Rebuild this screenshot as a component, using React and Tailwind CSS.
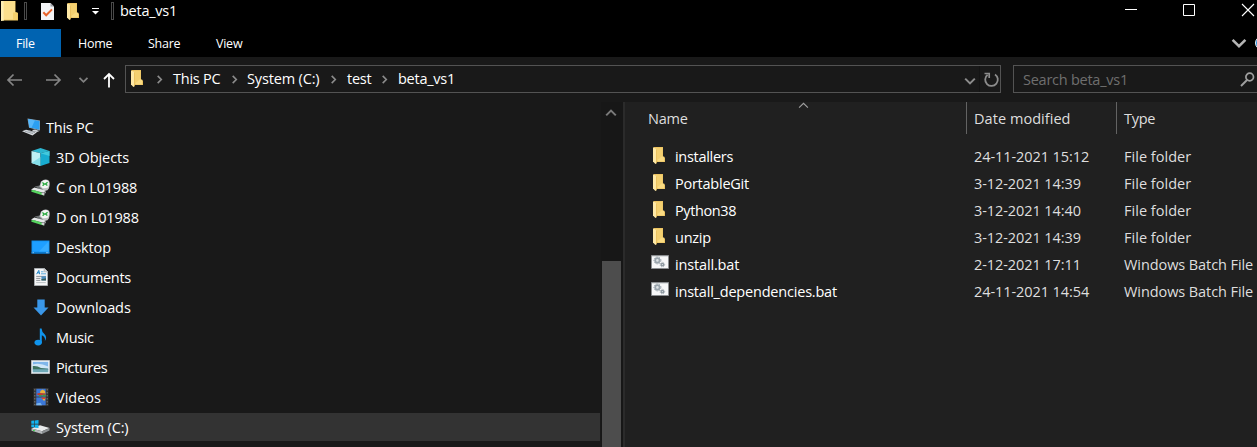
import React from "react";

/* ---------- icons ---------- */

function Folder({ className = "" }) {
  return (
    <svg className={"shrink-0 " + className} width="12" height="17" viewBox="0 0 12 17">
      <path d="M0.5 0H10V10L12 10.6V15H1Z" fill="#e9bf5c" />
      <path d="M3 0.6H9.6V14H3Z" fill="#f4d070" />
      <path d="M8.6 9.6H11.2V14.6H4.6V13Z" fill="#fadb82" />
      <path d="M0 0.6L3.4 1.8V16.4L2.4 17L0 14.4Z" fill="#ffe9a6" />
      <path d="M3.2 2.2L4 2.4V15.6L3.2 16.4Z" fill="#e8bd58" />
    </svg>
  );
}

function BigFolder() {
  return (
    <svg className="shrink-0" width="17" height="20" viewBox="0 0 17 20">
      <path d="M0 0H14.5V11L17 12V19.4H0Z" fill="#ecc662" />
      <path d="M0 0H3V19.4L0 20Z" fill="#fdeeb4" />
      <path d="M2.6 0H14V18.6H2.6Z" fill="#fbdf8c" />
      <path d="M12 11.5H16.4V18.8H12Z" fill="#f5d06c" />
    </svg>
  );
}

function CheckedPage() {
  return (
    <svg className="shrink-0" width="13" height="17" viewBox="0 0 13 17">
      <path d="M0 0H9.5L13 3.5V17H0Z" fill="#f3f4f6" />
      <path d="M9.5 0V3.5H13Z" fill="#9a9da3" />
      <path d="M2.3 9.2L5.2 12.3L11 6.4" fill="none" stroke="#e8632b" strokeWidth="2" />
    </svg>
  );
}

function Chevron({ dir, size = 8, color = "#8c8c8c", w = 1.8, className = "" }) {
  const d = {
    right: "M3 1L7 5L3 9",
    down: "M1 3L5 7L9 3",
    up: "M1 7L5 3L9 7",
  }[dir];
  return (
    <svg className={"shrink-0 " + className} width={size} height={size} viewBox="0 0 10 10">
      <path d={d} fill="none" stroke={color} strokeWidth={w} />
    </svg>
  );
}

function Computer() {
  return (
    <svg width="19" height="18" viewBox="0 0 19 18">
      <path d="M5.5 0.5L18 2.5V12.5L7 9.8Z" fill="#8fa3b3" />
      <path d="M6.2 1.3L17.5 3V11.8L7.4 9.2Z" fill="#2b9ff2" />
      <path d="M6.2 1.3L13 2.3L9.5 9.7L7.4 9.2Z" fill="#56b7fa" />
      <path d="M10 12L13 11.5L17.5 13L15 14L11.5 13.6Z" fill="#cfd5da" />
      <path d="M0 13.2L4 11.8L15 14.2L10.5 17.4Z" fill="#d6dade" />
      <path d="M3 13.2L11 15.6M6 12.6L13 14.6" stroke="#8e969d" strokeWidth="0.8" />
    </svg>
  );
}

function Cube() {
  return (
    <svg width="19" height="18" viewBox="0 0 19 18">
      <path d="M0.5 3L9.5 0L18.5 3L9.5 5.2Z" fill="#2cb5cf" />
      <path d="M0.5 3L9.5 5.2V18L0.5 15Z" fill="#bdf0f5" />
      <path d="M0.5 15L9.5 9V18Z" fill="#85dfea" />
      <path d="M9.5 5.2L18.5 3V15L9.5 18Z" fill="#18acd0" />
      <path d="M9.5 5.2L18.5 3V8Z" fill="#42c9dd" />
    </svg>
  );
}

function NetDrive() {
  return (
    <svg width="19" height="17" viewBox="0 0 19 17">
      <path d="M3.6 7.6L8.6 6.6L14 10.4L11 11.4Z" fill="#6c7072" />
      <path d="M8.4 7.6L10 2.6Q14-1.4 18 1.8Q19.6 5 17.8 9.6Q16.4 12.6 13 11.6Z" fill="#bfc3c4" />
      <path d="M9.6 7L10.6 3Q14-0.4 17.4 2.2Q18.4 5 17 8.4Q14 9.6 11.6 9Z" fill="#f4f5f5" />
      <path d="M11.4 3.4L13.4 5L11.6 6.8M16.6 3.2L14.4 5L16.4 6.6" fill="none" stroke="#23a83b" strokeWidth="1.3" />
      <path d="M0 10.4L3.4 8.4L14.4 11.6L13.4 13.4L8 12.8Z" fill="#e6e8e9" />
      <path d="M0.4 11.2L3 11L12.6 14.2L13 16.6L9 15.6L0.4 12.8Z" fill="#58d561" />
      <path d="M10.4 13.6L13.4 13.6V16.6L10.8 15.8Z" fill="#cfd2d3" />
      <path d="M13.4 13.4L15 11.8V13.6L13.4 15.6Z" fill="#8e9294" />
    </svg>
  );
}

function Desktop() {
  return (
    <svg width="19" height="14" viewBox="0 0 19 14">
      <path d="M0.5 0.5H18.5V13.5H0.5Z" fill="#0f8be8" />
      <path d="M1.3 1.3H17.7V11.6H1.3Z" fill="#1e9fff" />
      <path d="M17.7 1.3V11.6H8Z" fill="#35acff" />
      <path d="M0.5 12H18.5V13.5H0.5Z" fill="#0b79cc" />
      <path d="M1.5 12.7H3M15 12.7H17.5" stroke="#cfe9ff" strokeWidth="0.6" />
    </svg>
  );
}

function Document() {
  return (
    <svg width="14" height="18" viewBox="0 0 14 18">
      <path d="M0.5 0.5H10.5L13.5 3.5V17.5H0.5Z" fill="#f5f6f7" stroke="#a9adb0" />
      <path d="M10.2 0.5V3.8H13.5" fill="#d5d8da" stroke="#a9adb0" strokeWidth="0.8" />
      <path d="M2.6 6.2L4.8 2.4L5.6 6.2M3.5 4.8H5.4" stroke="#1e85c8" strokeWidth="1" fill="none" />
      <path d="M7 3.8H9.5M7 5.8H12" stroke="#4ba0d4" strokeWidth="0.9" />
      <path d="M2.2 8.4H12M2.2 10.4H6.4M2.2 12.4H6.4" stroke="#83898e" strokeWidth="0.9" />
      <path d="M7.4 8.3H12V12.4H7.4Z" fill="#4d8fc0" />
      <path d="M7.4 11.3L12 10.2V12.4H7.4Z" fill="#375b55" />
      <path d="M2.2 14.6H11.8" stroke="#b5babd" strokeWidth="0.9" />
    </svg>
  );
}

function Download() {
  return (
    <svg width="16" height="17" viewBox="0 0 16 17">
      <path d="M4.3 0.5H11.7V8.5H15.5L8 16.5L0.5 8.5H4.3Z" fill="#3a97e8" />
    </svg>
  );
}

function Music() {
  return (
    <svg width="13" height="18" viewBox="0 0 13 18">
      <ellipse cx="4.2" cy="14.6" rx="3.7" ry="2.8" fill="#1094ec" />
      <path d="M5.8 0.5H7.6Q7.8 4 10.4 6Q13.6 9 10.8 13.2Q11.8 9 7.8 7.2V14.8H5.8Z" fill="#1094ec" />
    </svg>
  );
}

function Picture() {
  return (
    <svg width="19" height="14" viewBox="0 0 19 14">
      <path d="M0.5 0.5H18.5V13.5H0.5Z" fill="#f4f5f6" stroke="#b6babd" />
      <path d="M1.8 1.8H17.2V12.2H1.8Z" fill="#7fb6ea" />
      <path d="M1.8 4.5Q9 2.5 17.2 6.5V8.5H1.8Z" fill="#cfe6f7" />
      <path d="M1.8 6Q6 5.4 10 8L17.2 8.8V9.8H1.8Z" fill="#3f7461" />
      <path d="M1.8 9.4H17.2V12.2H1.8Z" fill="#6fa9b7" />
    </svg>
  );
}

function Video() {
  return (
    <svg width="16" height="18" viewBox="0 0 16 18">
      <path d="M0.5 0H15.5V18H0.5Z" fill="#353535" />
      <path d="M1.8 1V17M14.2 1V17" stroke="#777" strokeWidth="1" strokeDasharray="1.5 1.5" />
      <path d="M3.3 0.8H12.7V8.6H3.3Z" fill="#3c78d8" />
      <path d="M3.3 9.4H12.7V17.2H3.3Z" fill="#3c78d8" />
      <path d="M7.4 3L9.6 1.4L12 3L12.4 5.4H7Z" fill="#e8b23a" />
      <path d="M3.3 6L6 5L12.7 5.6V7L6 7.4Z" fill="#c53a2c" />
      <path d="M6 7H9L8 8.6H6Z" fill="#3e9a45" />
      <path d="M9.6 6.6H12.7V8.6H9.6Z" fill="#3e9a45" />
      <path d="M8 9.4H12.7V11H9Z" fill="#d8432f" />
      <path d="M9.6 11H12V12.6H10.4Z" fill="#e8b23a" />
      <path d="M3.3 15.4L7.5 14.8L9 17.2H3.3Z" fill="#79b5ee" />
    </svg>
  );
}

function SystemDrive() {
  return (
    <svg width="19" height="14" viewBox="0 0 19 14">
      <path d="M0.5 8.5L9 5.2L18.5 8L11 11.2Z" fill="#e9ebec" />
      <path d="M0.5 8.5L11 11.2V14L0.5 10.8Z" fill="#b5b9bb" />
      <path d="M11 11.2L18.5 8V10.4L11 14Z" fill="#8b8f91" />
      <path d="M2 10.3L4 10.9" stroke="#3bd14c" strokeWidth="1" />
      <path d="M0.3 0.8L3.4 0.5V3.8H0.3ZM4 0.4L7.5 0V3.8H4ZM0.3 4.4H3.4V7.6L0.3 7.3ZM4 4.4H7.5V8L4 7.7Z" fill="#12b4f0" />
    </svg>
  );
}

function BatchFile() {
  return (
    <svg className="shrink-0" width="18" height="14" viewBox="0 0 18 14">
      <path d="M0.5 0.5H17.5V13.5H0.5Z" fill="#f7f8f9" stroke="#8a8d90" />
      <path d="M1 1H17V1.8H1Z" fill="#d5d8da" />
      <circle cx="6.4" cy="5.4" r="2.2" fill="#dfe4e7" stroke="#9aa5ad" strokeWidth="1.8" />
      <circle cx="6.4" cy="5.4" r="3.5" fill="none" stroke="#9aa5ad" strokeWidth="1" strokeDasharray="1.3 1.2" />
      <circle cx="11.4" cy="9.6" r="1.3" fill="#dfe4e7" stroke="#8c979f" strokeWidth="1.3" />
      <circle cx="11.4" cy="9.6" r="2.3" fill="none" stroke="#8c979f" strokeWidth="0.8" strokeDasharray="0.9 0.9" />
    </svg>
  );
}

/* ---------- data ---------- */

const tree = [
  { label: "3D Objects", icon: <Cube />, fit: "tracking-[-0.05px]" },
  { label: "C on L01988", icon: <NetDrive />, fit: "tracking-[-0.2px]" },
  { label: "D on L01988", icon: <NetDrive />, fit: "tracking-[-0.17px]" },
  { label: "Desktop", icon: <Desktop />, fit: "tracking-[-0.15px]" },
  { label: "Documents", icon: <Document />, fit: "tracking-[-0.3px]" },
  { label: "Downloads", icon: <Download />, fit: "tracking-[-0.1px]" },
  { label: "Music", icon: <Music />, fit: "tracking-[-0.35px]" },
  { label: "Pictures", icon: <Picture />, fit: "tracking-[-0.4px]" },
  { label: "Videos", icon: <Video />, fit: "tracking-[0px]" },
  { label: "System (C:)", icon: <SystemDrive />, fit: "tracking-[-0.15px]", selected: true },
];

const files = [
  { name: "installers", date: "24-11-2021 15:12", type: "File folder", fit: "tracking-[-0.3px]" },
  { name: "PortableGit", date: "3-12-2021 14:39", type: "File folder", fit: "tracking-[-0.25px]" },
  { name: "Python38", date: "3-12-2021 14:40", type: "File folder", fit: "tracking-[-0.4px]" },
  { name: "unzip", date: "3-12-2021 14:39", type: "File folder", fit: "tracking-[-0.25px]" },
  { name: "install.bat", date: "2-12-2021 17:11", type: "Windows Batch File", fit: "tracking-[-0.15px]" },
  { name: "install_dependencies.bat", date: "24-11-2021 14:54", type: "Windows Batch File", fit: "tracking-[-0.2px]" },
];

export default function App() {
  return (
    <div className="flex h-[447px] w-[1257px] flex-col overflow-hidden bg-[#191919] font-['Open_Sans','Noto_Sans',sans-serif] text-[14.5px] tracking-[-0.25px] text-white">
      <header className="flex h-[29px] shrink-0 items-start bg-black">
        <div className="flex h-[22px] items-center pl-px">
          <BigFolder />
          <span className="ml-[6px] h-[18px] w-[3px] border border-[#4a4a4a]" />
          <span className="ml-[14px]"><CheckedPage /></span>
          <Folder className="ml-[13px]" />
          <svg className="ml-[12px]" width="9" height="8" viewBox="0 0 9 8">
            <path d="M1 1.500H8" stroke="#fff" />
            <path d="M1 4H8L4.500 7.500Z" fill="#fff" />
          </svg>
          <span className="ml-[11px] h-[18px] w-[3px] border border-[#4a4a4a]" />
          <span className="ml-[6px]">beta_vs1</span>
        </div>
        <svg className="ml-auto mt-[3px]" width="132" height="14" viewBox="0 0 132 14">
          <path d="M0 6.500H12" stroke="#fff" />
          <path d="M58.500 1.500H69.500V12.500H58.500Z" fill="none" stroke="#fff" />
          <path d="M117 1L129 13M129 1L117 13" stroke="#fff" strokeWidth="1.100" />
        </svg>
      </header>

      <nav className="flex h-[28px] shrink-0 items-center bg-black text-[12.5px]">
        <span className="flex h-full w-[61px] items-center bg-[#0063b1] pl-[16px] pt-[2px]">File</span>
        <span className="w-[70px] pl-[17px] pt-[2px]">Home</span>
        <span className="w-[68px] pl-[17px] pt-[2px]">Share</span>
        <span className="pl-[17px] pt-[2px]">View</span>
        <Chevron dir="down" size={16} color="#b4b4b4" w={1.600} className="ml-auto" />
        <svg className="ml-[8px]" width="2" height="14" viewBox="0 0 2 14">
          <circle cx="7" cy="7" r="6.500" fill="#2b8fd8" stroke="#e8f3fb" />
        </svg>
      </nav>

      <div className="flex h-[45px] shrink-0 items-start pt-[8px]">
        <svg className="shrink-0" width="125" height="28" viewBox="0 0 125 28" fill="none">
          <path d="M22 15H8M13.500 9.500L8 15L13.500 20.500" stroke="#858585" strokeWidth="1.700" />
          <path d="M46 15H60M54.500 9.500L60 15L54.500 20.500" stroke="#858585" strokeWidth="1.700" />
          <path d="M79.500 12.800L83.500 16.800L87.500 12.800" stroke="#808080" strokeWidth="1.800" />
          <path d="M109 22.500V9M104 14L109 9L114 14" stroke="#fff" strokeWidth="1.800" />
        </svg>
        <div className="flex h-[28px] w-[876px] shrink-0 items-center border border-[#535353] pl-[5px] pr-0">
          <Folder className="mb-px" />
          <Chevron dir="right" size={9} className="ml-[12px]" />
          <span className="w-[66px] pl-[9px]">This PC</span>
          <Chevron dir="right" size={9} />
          <span className="w-[90px] pl-[8px] tracking-[-0.15px]">System (C:)</span>
          <Chevron dir="right" size={9} />
          <span className="w-[42px] pl-[9px]">test</span>
          <Chevron dir="right" size={9} />
          <span className="pl-[9px]">beta_vs1</span>
          <Chevron dir="down" size={12} w={1.700} className="ml-auto mt-[3px]" />
          <span className="ml-[3px] h-[26px] w-px bg-[#141414]" />
          <svg className="ml-[3px]" width="17" height="17" viewBox="0 0 17 17" fill="none">
            <path d="M12 3.400A6.300 6.300 0 1 1 4.600 3.700" stroke="#8c8c8c" strokeWidth="1.800" />
            <path d="M1.500 2.500H6.200V7" stroke="#8c8c8c" strokeWidth="1.700" />
          </svg>
        </div>
        <div className="ml-[12px] flex h-[28px] w-[244px] shrink-0 items-center border border-r-0 border-[#535353] pl-[9px] text-[#6f6f6f]">
          <span className="pt-px">Search beta_vs1</span>
          <svg className="ml-auto mr-[2px]" width="15" height="15" viewBox="0 0 15 15" fill="none">
            <circle cx="9.700" cy="5" r="3.800" stroke="#a0a0a0" strokeWidth="1.700" />
            <path d="M7 8L1 14" stroke="#a0a0a0" strokeWidth="1.900" />
          </svg>
        </div>
      </div>

      <main className="flex min-h-0 flex-1">
        <aside className="flex w-[601px] shrink-0 flex-col pt-[10px]">
          <div className="flex h-[30px] shrink-0 items-center pl-[22px]">
            <Computer />
            <span className="ml-[5px] pt-[2px]">This PC</span>
          </div>
          {tree.map((t) => (
            <div key={t.label} className="flex h-[30px] shrink-0 items-center">
              <div className={t.selected ? "flex h-[28px] w-[600px] items-center bg-[#333333]" : "flex h-[28px] w-[600px] items-center"}>
                <span className="ml-[31px] flex w-[19px] justify-center">{t.icon}</span>
                <span className={"ml-[6px] pt-[2px] " + t.fit}>{t.label}</span>
              </div>
            </div>
          ))}
        </aside>
        <div className="flex w-[22px] shrink-0 flex-col items-start bg-[#171717] pl-px">
          <Chevron dir="up" size={12} color="#7a7a7a" w={1.700} className="ml-[3px] mt-[5px]" />
          <div className="mt-[142px] w-[19px] flex-1 bg-[#4d4d4d]" />
        </div>
        <section className="flex min-w-0 flex-1 flex-col border-l-2 border-[#2b2b2b] bg-[#202020] text-[#dedede]">
          <div className="flex h-[32px] shrink-0 items-center">
            <span className="relative flex h-full w-[341px] items-center pl-[23px] pt-[2px]">
              Name
              <Chevron dir="up" size={11} w={1} color="#a0a0a0" className="absolute left-[173px] -top-[2px]" />
            </span>
            <span className="flex h-full w-[150px] items-center border-l border-[#636363] pl-[7px] pt-[2px] tracking-[0.05px]">Date modified</span>
            <span className="flex h-full items-center border-l border-[#636363] pl-[7px] pt-[2px]">Type</span>
          </div>
          <div className="mt-[9px] flex flex-col">
            {files.map((f) => (
              <div key={f.name} className="flex h-[27px] items-center whitespace-nowrap">
                <span className="flex w-[50px] items-center pl-[26px]">
                  {f.type === "File folder" ? <span className="pb-[2px] pl-[2px]"><Folder /></span> : <span className="pb-[6px]"><BatchFile /></span>}
                </span>
                <span className={"w-[299px] text-white " + f.fit}>{f.name}</span>
                <span className="w-[150px] tracking-[-0.08px]">{f.date}</span>
                <span className={f.type === "File folder" ? "tracking-[0.03px]" : "tracking-[-0.08px]"}>{f.type}</span>
              </div>
            ))}
          </div>
        </section>
      </main>
    </div>
  );
}
